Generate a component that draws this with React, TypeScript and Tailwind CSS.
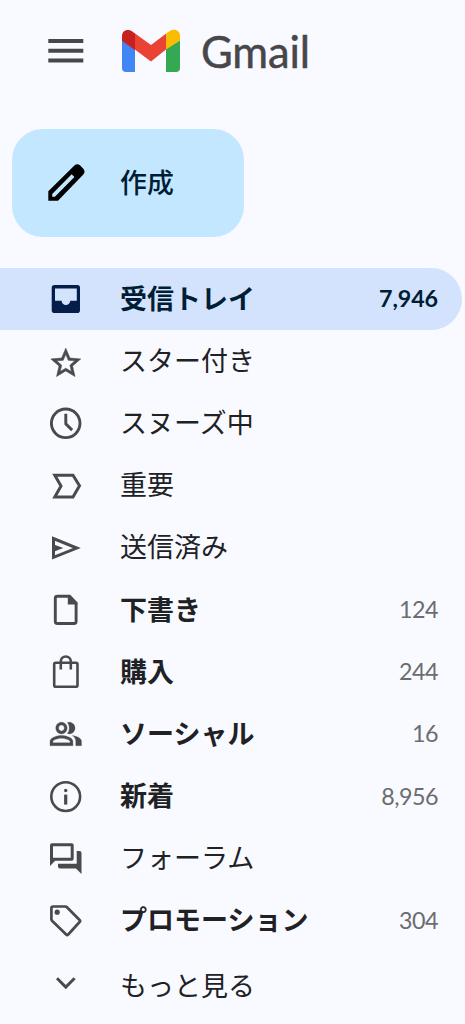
import type { ReactNode } from "react";

type Item = {
  label: string;
  icon: ReactNode;
  count?: string;
  bold?: boolean;
  active?: boolean;
  more?: boolean;
};

const stroke = { fill: "none", stroke: "currentColor", strokeWidth: 2.9 };

const items: Item[] = [
  {
    label: "受信トレイ",
    count: "7,946",
    bold: true,
    active: true,
    icon: (
      <path
        fill="currentColor"
        fillRule="evenodd"
        d="M8.5 6h22.7a2.8 2.8 0 0 1 2.8 2.8v22.4a2.8 2.8 0 0 1-2.8 2.8H8.5a2.8 2.8 0 0 1-2.8-2.8V8.8A2.8 2.8 0 0 1 8.500 6zM9 9.500v12.300h6.600a4.300 4.300 0 0 0 8.600 0h6.600V9.500z"
      />
    ),
  },
  {
    label: "スター付き",
    icon: (
      <g transform="translate(1.9 4.200) scale(1.49)">
        <path
          fill="currentColor"
          stroke="currentColor"
          strokeWidth="0.4"
          d="M22 9.240l-7.190-.620L12 2 9.190 8.630 2 9.240l5.460 4.730L5.820 21 12 17.270 18.180 21l-1.630-7.030L22 9.240zM12 15.400l-3.760 2.270 1-4.280-3.320-2.880 4.380-.380L12 6.100l1.710 4.040 4.380.380-3.320 2.880 1 4.280L12 15.400z"
        />
      </g>
    ),
  },
  {
    label: "スヌーズ中",
    icon: (
      <g {...stroke}>
        <circle cx="19.700" cy="20.300" r="14.300" />
        <path d="M19.800 10.800v10l6.300 6.300" />
      </g>
    ),
  },
  {
    label: "重要",
    icon: <path {...stroke} strokeWidth={3} d="M8.800 9.300H27l6.500 10.500L27 31H8.800L15 20z" />,
  },
  {
    label: "送信済み",
    icon: (
      <g>
        <path {...stroke} strokeWidth={3} d="M7.500 10.600v18.800l23.300-9.300z" />
        <path fill="currentColor" d="M7 16.300l10.300 3.800L7 23.900z" />
      </g>
    ),
  },
  {
    label: "下書き",
    count: "124",
    bold: true,
    icon: (
      <g>
        <path
          {...stroke}
          d="M11.300 6.200h12.200l6.600 7v18.300a2 2 0 0 1-2 2H11.300a2 2 0 0 1-2-2V8.200a2 2 0 0 1 2-2z"
        />
        <path fill="currentColor" d="M21.800 5.300h2.500l7 8v1.200h-9.500z" />
      </g>
    ),
  },
  {
    label: "購入",
    count: "244",
    bold: true,
    icon: (
      <g {...stroke} strokeWidth={2.6} transform="translate(0 -.5)">
        <rect x="8.200" y="11.300" width="23.300" height="24" rx="1.500" />
        <path d="M14.800 18v-8a5 5 0 0 1 10 0v8" />
      </g>
    ),
  },
  {
    label: "ソーシャル",
    count: "16",
    bold: true,
    icon: (
      <g transform="translate(2.600 2.300) scale(1.430 1.470)">
        <path
          fill="currentColor"
          stroke="currentColor"
          strokeWidth="0.2"
          d="M16.670 13.130C18.040 14.060 19 15.320 19 17v3h4v-3c0-2.180-3.570-3.470-6.330-3.870zM14.500 12c2.210 0 4-1.790 4-4s-1.790-4-4-4c-.470 0-.910.100-1.330.240a5.980 5.980 0 0 1 0 7.520c.420.140.860.240 1.330.240zM9 12c2.210 0 4-1.790 4-4s-1.790-4-4-4-4 1.790-4 4 1.790 4 4 4zm0-6c1.100 0 2 .900 2 2s-.900 2-2 2-2-.900-2-2 .900-2 2-2zM9 13c-2.670 0-8 1.340-8 4v3h16v-3c0-2.660-5.330-4-8-4zm6 5H3v-.990C3.200 16.290 6.300 15 9 15s5.800 1.290 6 2v1z"
        />
      </g>
    ),
  },
  {
    label: "新着",
    count: "8,956",
    bold: true,
    icon: (
      <g>
        <circle {...stroke} strokeWidth={2.6} cx="19.700" cy="19.600" r="14.400" />
        <circle fill="currentColor" cx="19.700" cy="13.500" r="1.700" />
        <path fill="currentColor" d="M18.100 17.600h3.200v10h-3.200z" />
      </g>
    ),
  },
  {
    label: "フォーラム",
    icon: (
      <g fill="currentColor">
        <path
          fillRule="evenodd"
          d="M6 4.300h19.700a2 2 0 0 1 2 2v13.500a2 2 0 0 1-2 2H9.200L4 27V6.300a2 2 0 0 1 2-2zm1 3v11.500h17.700V7.300z"
        />
        <path d="M30.700 12h2.800a2 2 0 0 1 2 2v21l-5.500-5.400H14a2 2 0 0 1-2-2v-2.900h18.700z" />
      </g>
    ),
  },
  {
    label: "プロモーション",
    count: "304",
    bold: true,
    icon: (
      <g transform="translate(0 -.500)">
        <path
          {...stroke}
          strokeWidth={2.7}
          strokeLinejoin="round"
          d="M7 6h12.500l1.200.500L33.600 19.500q1 1 0 2L22.200 34q-1 1-2 0L6 20.300l-.600-1.400V7.600A1.600 1.600 0 0 1 7 6z"
        />
        <circle fill="currentColor" cx="11.200" cy="11.700" r="2.600" />
      </g>
    ),
  },
  {
    label: "もっと見る",
    more: true,
    icon: <path {...stroke} d="M11 15.300l8.800 8.800 8.800-8.800" />,
  },
];

function MenuIcon() {
  return (
    <svg className="ml-12 h-6 w-9 shrink-0 text-[#47474b]" viewBox="0 0 36 24" fill="currentColor">
      <path d="M.3 0h35v4H.3zM.3 9.800h35v4H.3zM.3 19.600h35v4H.3z" />
    </svg>
  );
}

function GmailMark() {
  return (
    <svg className="mb-px ml-[38px] h-[43px] w-[58px] shrink-0" viewBox="0 0 58 44" preserveAspectRatio="none">
      <path fill="#4285f4" d="M0 12l13 8.500V44H4a4 4 0 0 1-4-4z" />
      <path fill="#34a853" d="M44 20.500L58 11.500V40a4 4 0 0 1-4 4H44z" />
      <path fill="#ea4335" d="M12.800 4.300L29 16.400 44.200 4.700v16L29 33.300 12.800 20.900z" />
      <path fill="#c5221f" d="M0 12.300V7C0 1.400 5.500-.800 10.300 2.500L13 4.500v17z" />
      <path fill="#fbbc04" d="M44 21V4.700l3.500-2.500C52.500-1.200 58 1.400 58 7v4.700z" />
    </svg>
  );
}

function PencilIcon() {
  return (
    <svg className="ml-9 h-10 w-10 shrink-0" viewBox="0 0 40 40">
      <path
        fill="#000"
        fillRule="evenodd"
        d="M.3 37.700V28.200L26.400 2.600Q29.300 0 32.200 2.600L35.300 5.700Q37.800 8.500 35.300 11.400L10 37.700zM4.200 33.700H6.900L26.400 14 23.700 11.300 4.200 30.900z"
      />
    </svg>
  );
}

function Row({ item }: { item: Item }) {
  const tone = item.active ? "bg-[#d3e3fd] text-[#041e49]" : "text-[#4a4a4d]";
  const labelTone = item.active ? "text-[#001d35]" : "text-[#202124]";
  const weight = item.bold ? "font-bold" : "font-normal";
  const offset = item.more ? "pt-[3px]" : "pb-[3px]";
  const countTone = item.active
    ? "font-bold text-[#001d35] tracking-[-0.1px]"
    : "text-[#6b6c70] tracking-[-0.5px]";
  return (
    <li className={`mr-[3px] flex h-[62.2px] items-center rounded-r-full pr-6 ${tone}`}>
      <svg className="ml-[46px] size-10 shrink-0" viewBox="0 0 40 40">
        {item.icon}
      </svg>
      <span
        className={`ml-[34px] flex-1 whitespace-nowrap text-[27px] leading-10 ${offset} ${labelTone} ${weight}`}
      >
        {item.label}
      </span>
      {item.count && (
        <span className={`pb-[2px] font-['Lato','Noto_Sans_CJK_JP',sans-serif] text-[23.3px] leading-8 ${countTone}`}>
          {item.count}
        </span>
      )}
    </li>
  );
}

export default function App() {
  return (
    <div className="flex h-[1024px] w-[465px] flex-col overflow-hidden bg-[#f9faff] font-['Noto_Sans_CJK_JP',sans-serif]">
      <header className="flex h-[102px] shrink-0 items-center">
        <MenuIcon />
        <GmailMark />
        <span className="ml-[21px] font-['Lato',sans-serif] text-[43.5px] leading-[50px] tracking-[-0.100px] text-[#47474b] [-webkit-text-stroke:0.5px_#47474b]">
          Gmail
        </span>
      </header>
      <button
        type="button"
        className="ml-3 mt-[27px] flex h-[108px] w-[232px] shrink-0 items-center rounded-[31px] bg-[#c2e7ff] text-left"
      >
        <PencilIcon />
        <span className="ml-8 pb-[3px] text-[26.9px] font-medium leading-10 text-[#001d35]">作成</span>
      </button>
      <nav className="mt-[31px]">
        <ul>
          {items.map((item) => (
            <Row key={item.label} item={item} />
          ))}
        </ul>
      </nav>
    </div>
  );
}
